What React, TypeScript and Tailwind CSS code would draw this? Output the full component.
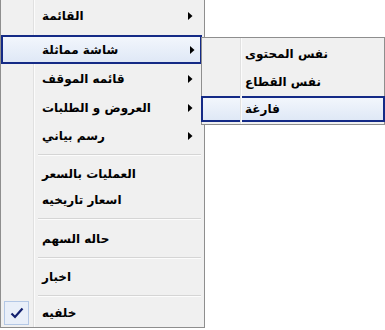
import React from "react";

const font = { fontFamily: '"DejaVu Sans", "Noto Sans", sans-serif' };

function Arrow() {
  return (
    <svg width="5" height="8" viewBox="0 0 5 8" className="absolute left-[187px] top-1/2 -translate-y-1/2">
      <path d="M0 0 L4.5 4 L0 8 Z" fill="#000" />
    </svg>
  );
}

function Item({ label, h, arrow, highlight, check }: { label: string; h: number; arrow?: boolean; highlight?: boolean; check?: boolean }) {
  return (
    <div
      className={
        "relative flex items-center " +
        (highlight
          ? "border-2 border-[#142a86] bg-gradient-to-b from-[#f2f6fc] to-[#dfe8f6] w-[201px]"
          : "w-full")
      }
      style={{ height: h }}
    >
      {check && (
        <div className="absolute left-[3px] top-0 bottom-0 w-[25px] border border-[#b4c8e6] bg-[#e9eff9] flex items-center justify-center">
          <svg width="14" height="12" viewBox="0 0 14 12">
            <path d="M1.5 6.5 L5 10 L12.5 1.5" stroke="#12206e" strokeWidth="2.2" fill="none" />
          </svg>
        </div>
      )}
      <span dir="rtl" className={"text-[12px] font-bold text-black leading-none " + (highlight ? "ml-[39px]" : "ml-[41px]")}>
        {label}
      </span>
      {arrow && <Arrow />}
    </div>
  );
}

function Sep({ h }: { h: number }) {
  return (
    <div className="flex flex-col justify-center" style={{ height: h }}>
      <div className="ml-[37px] mr-[3px] h-px bg-[#d5d5d5]" />
      <div className="ml-[37px] mr-[3px] h-px bg-[#fcfcfc]" />
    </div>
  );
}

export default function App() {
  return (
    <div className="relative w-[385px] h-[330px] bg-white overflow-hidden" style={font}>
      <div className="relative w-[205px] h-[328px] bg-[#f0f0f0] border-l border-r border-b border-[#8e8e8e] flex flex-col pt-[2px]">
        <div className="absolute left-[32px] top-0 bottom-0 w-px bg-[#e0e0e0]" />
        <div className="absolute left-[33px] top-0 bottom-0 w-px bg-[#fbfbfb]" />
        <Item label="القائمة" h={28} arrow />
        <div className="h-[5px]" />
        <Item label="شاشة مماثلة" h={29} arrow highlight />
        <Item label="قائمه الموقف" h={30} arrow />
        <Item label="العروض و الطلبات" h={28} arrow />
        <Item label="رسم بياني" h={28} arrow />
        <Sep h={10} />
        <Item label="العمليات بالسعر" h={27} />
        <Item label="اسعار تاريخيه" h={26} />
        <Sep h={12} />
        <Item label="حاله السهم" h={28} />
        <Sep h={10} />
        <Item label="اخبار" h={28} />
        <Sep h={10} />
        <Item label="خلفيه" h={24} check />
      </div>

      <div className="absolute left-[201px] top-[37px] w-[184px] h-[88px] bg-[#f0f0f0] border border-[#8e8e8e] flex flex-col pt-[2px]">
        <div className="absolute left-[38px] top-0 bottom-0 w-px bg-[#e0e0e0]" />
        <div className="absolute left-[39px] top-0 bottom-0 w-px bg-[#fbfbfb]" />
        <div className="h-[28px] flex items-center">
          <span dir="rtl" className="ml-[43px] text-[12px] font-bold leading-none">نفس المحتوى</span>
        </div>
        <div className="h-[28px] flex items-center">
          <span dir="rtl" className="ml-[43px] text-[12px] font-bold leading-none">نفس القطاع</span>
        </div>
        <div className="h-[26px] -mx-px flex items-center border-2 border-[#142a86] bg-gradient-to-b from-[#f2f6fc] to-[#dfe8f6]">
          <span dir="rtl" className="ml-[42px] text-[12px] font-bold leading-none">فارغة</span>
        </div>
      </div>
    </div>
  );
}
